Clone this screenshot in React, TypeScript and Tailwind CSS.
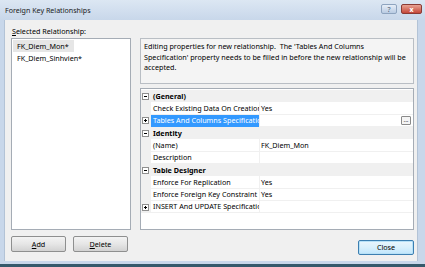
import React from "react";

function ExpandBox({ plus }: { plus?: boolean }) {
  return (
    <div className="relative w-[7px] h-[7px] border border-[#8f8f8f] bg-white ml-[1px] shrink-0">
      <div className="absolute left-[1px] top-[2px] w-[3px] h-[1px] bg-black" />
      {plus && <div className="absolute left-[2px] top-[1px] w-[1px] h-[3px] bg-black" />}
    </div>
  );
}

function CategoryRow({ label }: { label: string }) {
  return (
    <div className="flex items-center h-[12.33px] bg-[#f0f0f0]">
      <div className="w-[11px] flex items-center shrink-0">
        <ExpandBox />
      </div>
      <div className="pl-[1px] font-bold whitespace-nowrap">{label}</div>
    </div>
  );
}

function ItemRow({
  name,
  value,
  expand,
  selected,
  ellipsis,
}: {
  name: string;
  value?: string;
  expand?: boolean;
  selected?: boolean;
  ellipsis?: boolean;
}) {
  return (
    <div className="flex h-[12.33px]">
      <div className="w-[10px] flex items-center bg-[#f0f0f0] shrink-0">
        {expand && <ExpandBox plus />}
      </div>
      <div
        className={
          selected
            ? "w-[108px] shrink-0 overflow-hidden whitespace-nowrap bg-[#3399ff] text-white pl-[2px] flex items-center border-b border-[#3399ff]"
            : "w-[108px] shrink-0 overflow-hidden whitespace-nowrap bg-white pl-[2px] flex items-center border-b border-[#f0f0f0]"
        }
      >
        {name}
      </div>
      <div className="w-[1px] bg-[#f0f0f0] shrink-0" />
      <div className="flex-1 flex items-center justify-between bg-white pl-[1px] border-b border-[#f0f0f0] whitespace-nowrap">
        <span>{value}</span>
        {ellipsis && (
          <div className="w-[10px] h-[9px] mr-[2px] border border-[#8a8a8a] rounded-[1px] bg-[#f4f4f4] flex items-end justify-center text-[6px] leading-[6px] pb-[1px]">
            ...
          </div>
        )}
      </div>
    </div>
  );
}

export default function App() {
  return (
    <div className="w-[425px] h-[267px] flex flex-col bg-[#c8d7ea] font-['Noto_Sans',sans-serif] text-[7.2px] text-black overflow-hidden">
      {/* Title bar */}
      <div className="h-[20px] flex items-start justify-between pl-[5px] pr-[3px] bg-gradient-to-b from-[#dce7f3] to-[#c8d7ea]">
        <div className="mt-[5px] text-[7.1px] leading-[10px] text-[#1b1b1b]">Foreign Key Relationships</div>
        <div className="flex gap-[4px] mt-[4px]">
          <div className="w-[16px] h-[10px] rounded-[2px] border border-[#8ea4bf] bg-gradient-to-b from-[#e6eef8] to-[#b9cbe2] flex items-center justify-center text-[7px] leading-[7px] text-[#4a5d75]">
            ?
          </div>
          <div className="w-[21px] h-[10px] rounded-[2px] border border-[#8a3b35] bg-gradient-to-b from-[#e8a293] to-[#c4463a] flex items-center justify-center text-[7px] leading-[7px] text-white font-bold">
            x
          </div>
        </div>
      </div>

      {/* Client area */}
      <div className="h-[241px] mx-[4px] mr-[7px] bg-[#f0f0f0] flex gap-[9px] pl-[6px] pr-[3px] border-x border-[#b3c3d6]">
        {/* Left column */}
        <div className="w-[120px] flex flex-col">
          <div className="mt-[6px] h-[10px] leading-[10px] pl-[1px] whitespace-nowrap">
            <span className="underline">S</span>elected Relationship:
          </div>
          <div className="mt-[2px] h-[192px] border border-[#a5acb5] bg-white flex flex-col px-[1px]">
            <div className="h-[13px] flex items-center">
              <span className="bg-[#e6e6e6] h-[12px] leading-[12px] pl-[4px] pr-[2px] w-[61px] whitespace-nowrap">FK_Diem_Mon*</span>
            </div>
            <div className="h-[13px] flex items-center pl-[4px] whitespace-nowrap">FK_Diem_Sinhvien*</div>
          </div>
          <div className="mt-[6px] flex gap-[7px]">
            <div className="w-[55px] h-[16px] rounded-[2px] border border-[#8e8f8f] bg-gradient-to-b from-[#f3f3f3] via-[#e6e6e6] to-[#d2d2d2] flex items-center justify-center">
              <span>
                <span className="underline">A</span>dd
              </span>
            </div>
            <div className="w-[55px] h-[16px] rounded-[2px] border border-[#8e8f8f] bg-gradient-to-b from-[#f3f3f3] via-[#e6e6e6] to-[#d2d2d2] flex items-center justify-center">
              <span>
                <span className="underline">D</span>elete
              </span>
            </div>
          </div>
        </div>

        {/* Right column */}
        <div className="flex-1 flex flex-col">
          <div className="mt-[18px] h-[46px] border border-[#b9bec4] bg-[#f4f4f4] pl-[3px] pt-[2px] leading-[10.5px] whitespace-nowrap">
            Editing properties for new relationship.&nbsp; The 'Tables And Columns
            <br />
            Specification' property needs to be filled in before the new relationship will be
            <br />
            accepted.
          </div>
          <div className="mt-[4px] h-[142px] border border-[#a5acb5] bg-white flex flex-col pt-[1px]">
            <CategoryRow label="(General)" />
            <ItemRow name="Check Existing Data On Creation Or Re-Enabling" value="Yes" />
            <ItemRow name="Tables And Columns Specification" expand selected ellipsis />
            <CategoryRow label="Identity" />
            <ItemRow name="(Name)" value="FK_Diem_Mon" />
            <ItemRow name="Description" />
            <CategoryRow label="Table Designer" />
            <ItemRow name="Enforce For Replication" value="Yes" />
            <ItemRow name="Enforce Foreign Key Constraint" value="Yes" />
            <ItemRow name="INSERT And UPDATE Specification" expand />
            <div className="flex-1 flex">
              <div className="w-[10px] bg-white" />
            </div>
          </div>
          <div className="mt-[10px] self-end w-[56px] h-[15px] rounded-[2px] border border-[#3c7fb1] bg-gradient-to-b from-[#eaf6fd] via-[#d9f0fc] to-[#bee6fd] flex items-center justify-center shadow-[inset_0_0_0_1px_#b7e1f7]">
            Close
          </div>
        </div>
      </div>

      {/* Bottom frame */}
      <div className="h-[3px]" />
      <div className="flex-1 bg-[#35596b]" />
    </div>
  );
}
